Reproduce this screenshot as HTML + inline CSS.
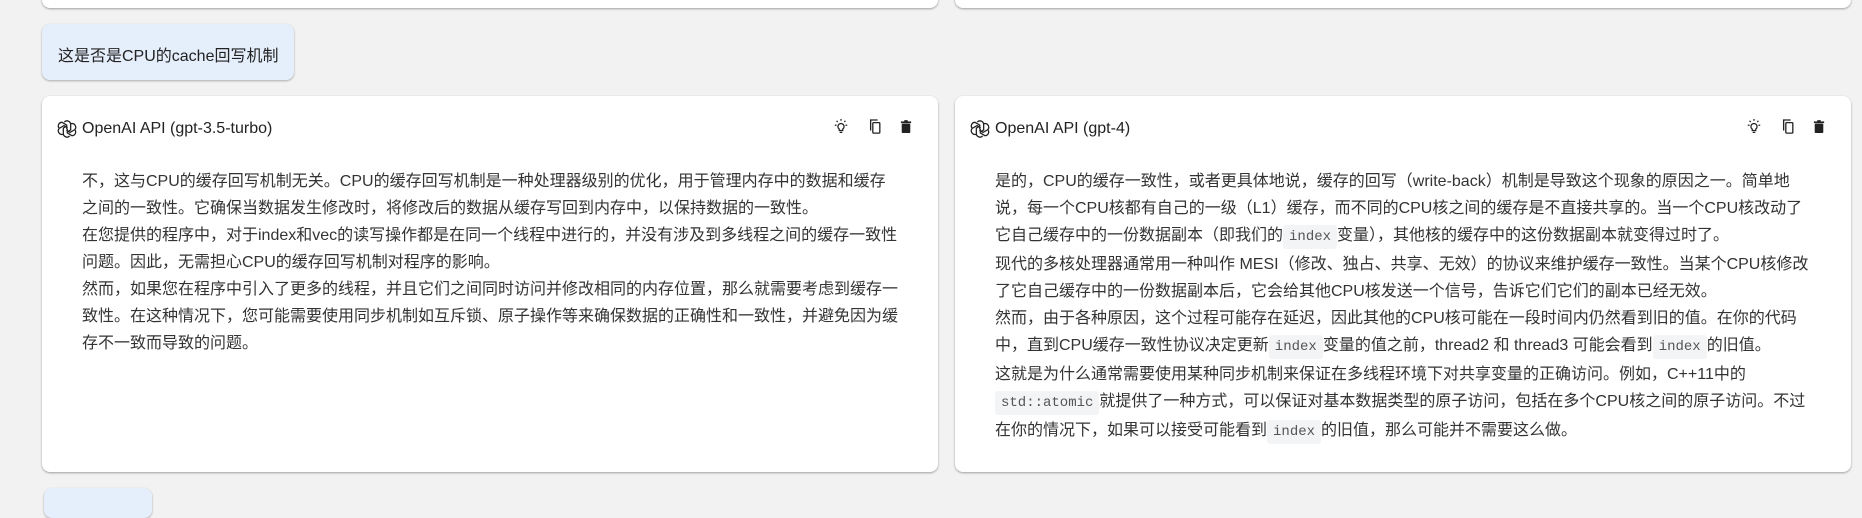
<!DOCTYPE html>
<html><head><meta charset="utf-8"><style>
*{box-sizing:border-box;margin:0;padding:0}
body{width:1862px;height:492px;background:#f2f2f2;overflow:hidden;position:relative;font-family:"Liberation Sans","Noto Sans CJK SC",sans-serif;color:#222}
.card{position:absolute;background:#fff;border-radius:8px;box-shadow:0 1px 2px rgba(0,0,0,.35)}
.hdr{position:absolute;left:14px;top:22px;font-size:16px;display:flex;align-items:center;color:#222}
.hdr svg{margin-right:4px}
.ic{position:absolute;top:22px}
.body{position:absolute;font-size:16px;line-height:27px;color:#333;white-space:nowrap}
code{font-family:"Liberation Mono",monospace;font-size:14px;background:#f3f4f6;padding:4px 6px;border-radius:3px;color:#555}
.bubble{position:absolute;background:#e5eefb;border-radius:8px;box-shadow:0 1px 2px rgba(0,0,0,.3);font-size:16px;white-space:nowrap}
</style></head><body>
<div class="card" style="left:42px;top:-20px;width:896px;height:28px"></div>
<div class="card" style="left:955px;top:-20px;width:896px;height:28px"></div>
<div class="bubble" style="left:42px;top:24px;width:252px;height:56px;padding:18px 16px;">这是否是CPU的cache回写机制</div>

<div class="card" style="left:42px;top:96px;width:896px;height:376px">
 <div class="hdr"><svg width="22" height="22" viewBox="0 0 24 24" fill="none" stroke="#222" stroke-width="1.4"><path d="M9 4.5a4 4 0 0 1 7 2.5v6l-4 2.3M16.5 6.2a4 4 0 0 1 4 6.5l-5.2 3-4-2.3M20.5 12.7a4 4 0 0 1-3 6.6l-5.2-3V11.7M15 19.5a4 4 0 0 1-7-2.5v-6l4-2.3M7.5 17.8a4 4 0 0 1-4-6.5l5.2-3 4 2.3M3.5 11.3a4 4 0 0 1 3-6.6l5.2 3v4.6"/></svg>OpenAI API (gpt-3.5-turbo)</div>
  <svg class="ic" style="left:791px" width="16" height="18" viewBox="0 0 18 20" fill="none" stroke="#222" stroke-width="1.4"><path d="M9 6a3.5 3.5 0 0 0-2 6.3V14h4v-1.7A3.5 3.5 0 0 0 9 6zM7.5 16h3M9 1v2M2 8h2M14 8h2M4 3l1.3 1.3M14 3l-1.3 1.3"/></svg>
  <svg class="ic" style="left:826px" width="14" height="18" viewBox="0 0 16 20" fill="none" stroke="#222" stroke-width="1.5"><path d="M3 14V2h8"/><rect x="5.5" y="5" width="8" height="12" rx="1"/></svg>
  <svg class="ic" style="left:858px" width="12" height="18" viewBox="0 0 14 20"><rect x="2" y="6" width="10" height="11" rx="1" fill="#222"/><rect x="1" y="3.5" width="12" height="2" fill="#222"/><rect x="5" y="2" width="4" height="2" fill="#222"/></svg>
 <div class="body" style="left:40px;top:72px">不，这与CPU的缓存回写机制无关。CPU的缓存回写机制是一种处理器级别的优化，用于管理内存中的数据和缓存<br>之间的一致性。它确保当数据发生修改时，将修改后的数据从缓存写回到内存中，以保持数据的一致性。<br>在您提供的程序中，对于index和vec的读写操作都是在同一个线程中进行的，并没有涉及到多线程之间的缓存一致性<br>问题。因此，无需担心CPU的缓存回写机制对程序的影响。<br>然而，如果您在程序中引入了更多的线程，并且它们之间同时访问并修改相同的内存位置，那么就需要考虑到缓存一<br>致性。在这种情况下，您可能需要使用同步机制如互斥锁、原子操作等来确保数据的正确性和一致性，并避免因为缓<br>存不一致而导致的问题。</div>
</div>

<div class="card" style="left:955px;top:96px;width:896px;height:376px">
 <div class="hdr"><svg width="22" height="22" viewBox="0 0 24 24" fill="none" stroke="#222" stroke-width="1.4"><path d="M9 4.5a4 4 0 0 1 7 2.5v6l-4 2.3M16.5 6.2a4 4 0 0 1 4 6.5l-5.2 3-4-2.3M20.5 12.7a4 4 0 0 1-3 6.6l-5.2-3V11.7M15 19.5a4 4 0 0 1-7-2.5v-6l4-2.3M7.5 17.8a4 4 0 0 1-4-6.5l5.2-3 4 2.3M3.5 11.3a4 4 0 0 1 3-6.6l5.2 3v4.6"/></svg>OpenAI API (gpt-4)</div>
  <svg class="ic" style="left:791px" width="16" height="18" viewBox="0 0 18 20" fill="none" stroke="#222" stroke-width="1.4"><path d="M9 6a3.5 3.5 0 0 0-2 6.3V14h4v-1.7A3.5 3.5 0 0 0 9 6zM7.5 16h3M9 1v2M2 8h2M14 8h2M4 3l1.3 1.3M14 3l-1.3 1.3"/></svg>
  <svg class="ic" style="left:826px" width="14" height="18" viewBox="0 0 16 20" fill="none" stroke="#222" stroke-width="1.5"><path d="M3 14V2h8"/><rect x="5.5" y="5" width="8" height="12" rx="1"/></svg>
  <svg class="ic" style="left:858px" width="12" height="18" viewBox="0 0 14 20"><rect x="2" y="6" width="10" height="11" rx="1" fill="#222"/><rect x="1" y="3.5" width="12" height="2" fill="#222"/><rect x="5" y="2" width="4" height="2" fill="#222"/></svg>
 <div class="body" style="left:40px;top:72px">是的，CPU的缓存一致性，或者更具体地说，缓存的回写（write-back）机制是导致这个现象的原因之一。简单地<br>说，每一个CPU核都有自己的一级（L1）缓存，而不同的CPU核之间的缓存是不直接共享的。当一个CPU核改动了<br>它自己缓存中的一份数据副本（即我们的<code>index</code>变量），其他核的缓存中的这份数据副本就变得过时了。<br>现代的多核处理器通常用一种叫作 MESI（修改、独占、共享、无效）的协议来维护缓存一致性。当某个CPU核修改<br>了它自己缓存中的一份数据副本后，它会给其他CPU核发送一个信号，告诉它们它们的副本已经无效。<br>然而，由于各种原因，这个过程可能存在延迟，因此其他的CPU核可能在一段时间内仍然看到旧的值。在你的代码<br>中，直到CPU缓存一致性协议决定更新<code>index</code>变量的值之前，thread2 和 thread3 可能会看到<code>index</code>的旧值。<br>这就是为什么通常需要使用某种同步机制来保证在多线程环境下对共享变量的正确访问。例如，C++11中的<br><code>std::atomic</code>就提供了一种方式，可以保证对基本数据类型的原子访问，包括在多个CPU核之间的原子访问。不过<br>在你的情况下，如果可以接受可能看到<code>index</code>的旧值，那么可能并不需要这么做。</div>
</div>
<div class="bubble" style="left:44px;top:488px;width:108px;height:30px"></div>
</body></html>
